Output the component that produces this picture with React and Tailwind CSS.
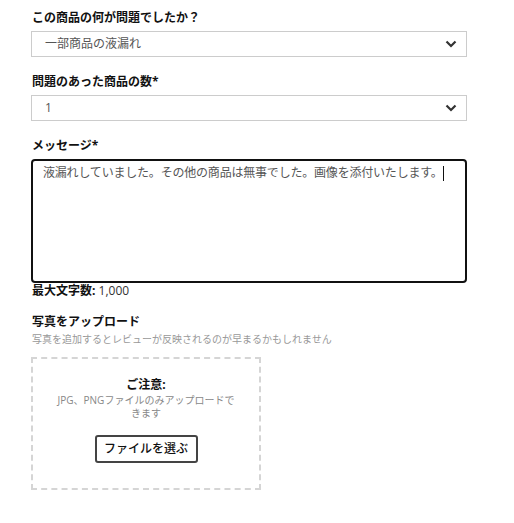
import React from 'react';

const font = { fontFamily: '"Open Sans", "Noto Sans CJK JP", sans-serif' };

const Chevron = () => (
  <svg width="12" height="8" viewBox="0 0 12 8" className="text-[#333]">
    <polyline points="1.5,1.5 6,6 10.5,1.5" fill="none" stroke="currentColor" strokeWidth="2.2" />
  </svg>
);

const SelectBox = ({ value }) => (
  <div className="h-[26px] border border-[#ccc] bg-white flex items-center justify-between pl-[13px] pr-[9px]">
    <span className="text-[12px] text-[#555]">{value}</span>
    <Chevron />
  </div>
);

const App = () => {
  return (
    <div className="min-h-screen bg-white text-[#111]" style={font}>
      <div className="w-[436px] ml-[31px] pt-[10px]">
        {/* 問題の種類 */}
        <div className="text-[12px] font-bold leading-[16px] mb-[5px] pl-[1px]">この商品の何が問題でしたか？</div>
        <SelectBox value="一部商品の液漏れ" />

        <div className="text-[12px] font-bold leading-[16px] mt-[17px] mb-[5px] pl-[1px]">問題のあった商品の数*</div>
        <SelectBox value="1" />

        {/* メッセージ */}
        <div className="text-[12px] font-bold leading-[16px] mt-[17px] mb-[5px] pl-[1px]">メッセージ*</div>
        <div className="h-[124px] border-2 border-[#111] rounded-[4px] pl-[10px] pt-[4px] text-[12px] leading-[16px]">
          <span className="text-[#555] tracking-[-0.2px]">
            液漏れしていました。その他の商品は無事でした。画像を添付いたします。
          </span>
          <span className="inline-block w-px h-[15px] bg-[#111] align-middle" />
        </div>
        <div className="text-[12px] leading-[16px] pl-[1px]">
          <span className="font-bold">最大文字数:</span> <span className="text-[#333]">1,000</span>
        </div>

        {/* 写真 */}
        <div className="text-[12px] font-bold leading-[16px] mt-[15px] pl-[1px]">写真をアップロード</div>
        <div className="text-[10px] text-[#999] leading-[14px] mt-[2px] pl-[1px]">
          写真を追加するとレビューが反映されるのが早まるかもしれません
        </div>
        <div className="w-[230px] h-[133px] mt-[11px] border-2 border-dashed border-[#d5d5d5] flex flex-col items-center pt-[18px] px-[22px]">
          <div className="text-[12px] font-bold leading-[16px]">ご注意:</div>
          <div className="text-[10px] text-[#888] leading-[13px] text-center mt-[1px]">
            JPG、PNGファイルのみアップロードできます
          </div>
          <button className="mt-[15px] w-[103px] h-[28px] border-2 border-[#444] rounded-[3px] text-[12px] font-medium text-[#111] bg-white">
            ファイルを選ぶ
          </button>
        </div>
      </div>
    </div>
  );
};

export default App;
